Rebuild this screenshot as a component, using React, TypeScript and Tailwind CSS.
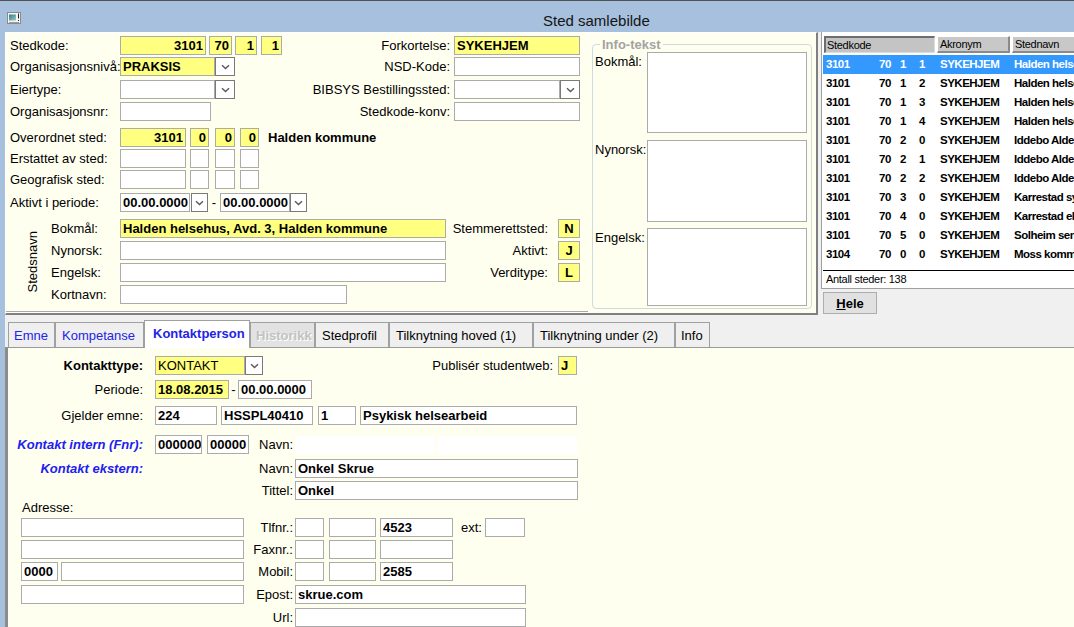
import React from "react";

type BoxProps = {
  className?: string;
  children?: React.ReactNode;
  yellow?: boolean;
  right?: boolean;
  center?: boolean;
  bold?: boolean;
};

function Box({ className = "", children, yellow = false, right = false, center = false, bold = true }: BoxProps) {
  return (
    <div
      className={`h-[19px] shrink-0 border border-[#ababab] flex items-center px-[2px] text-[13px] leading-none whitespace-nowrap overflow-hidden ${
        yellow ? "bg-[#ffff80]" : "bg-white"
      } ${right ? "justify-end" : center ? "justify-center" : ""} ${bold ? "font-bold" : ""} ${className}`}
    >
      {children}
    </div>
  );
}

function Dd({ className = "w-[20px]" }: { className?: string }) {
  return (
    <div className={`h-[19px] shrink-0 border border-[#7a7a7a] bg-white flex items-center justify-center ${className}`}>
      <svg width="9" height="6" viewBox="0 0 9 6">
        <path d="M1 1.2 L4.5 4.6 L8 1.2" fill="none" stroke="#5a5a5a" strokeWidth="1.4" />
      </svg>
    </div>
  );
}

function Lbl({ className = "", children }: { className?: string; children?: React.ReactNode }) {
  return <div className={`shrink-0 text-[13px] leading-[15px] whitespace-nowrap ${className}`}>{children}</div>;
}

function WinIcon() {
  return (
    <svg width="14" height="13" viewBox="0 0 14 13">
      <defs>
        <linearGradient id="g1" x1="0" y1="0" x2="1" y2="1">
          <stop offset="0" stopColor="#2f7f86" />
          <stop offset="1" stopColor="#9fc9c4" />
        </linearGradient>
      </defs>
      <rect x="0.5" y="0.5" width="13" height="11" fill="#f4f4f4" stroke="#8a8a8a" />
      <rect x="2" y="2.5" width="7" height="6" fill="url(#g1)" />
      <rect x="11" y="1.5" width="1" height="5" fill="#222" />
      <rect x="11" y="8" width="1" height="1" fill="#222" />
      <rect x="2" y="10" width="10" height="1" fill="#9a9a9a" />
    </svg>
  );
}

const listRows: string[][] = [
  ["3101", "70", "1", "1", "SYKEHJEM", "Halden helsehus, Avd. 1"],
  ["3101", "70", "1", "2", "SYKEHJEM", "Halden helsehus, Avd. 2"],
  ["3101", "70", "1", "3", "SYKEHJEM", "Halden helsehus, Avd. 3"],
  ["3101", "70", "1", "4", "SYKEHJEM", "Halden helsehus, Avd. 4"],
  ["3101", "70", "2", "0", "SYKEHJEM", "Iddebo Aldershjem"],
  ["3101", "70", "2", "1", "SYKEHJEM", "Iddebo Aldershjem, Avd. 1"],
  ["3101", "70", "2", "2", "SYKEHJEM", "Iddebo Aldershjem, Avd. 2"],
  ["3101", "70", "3", "0", "SYKEHJEM", "Karrestad sykehjem"],
  ["3101", "70", "4", "0", "SYKEHJEM", "Karrestad eldresenter"],
  ["3101", "70", "5", "0", "SYKEHJEM", "Solheim senter"],
  ["3104", "70", "0", "0", "SYKEHJEM", "Moss kommune"],
];

function TopLeftPanel() {
  return (
    <div className="w-[813px] h-[283px] shrink-0 bg-[#fffff0] border-t border-l border-t-white border-l-white border-r-2 border-b-2 border-r-[#808080] border-b-[#808080] flex">
      <div className="w-[582px] shrink-0 flex flex-col">
        <div className="pl-[4px] pr-[8px] pt-[3px] flex flex-col">
          <div className="flex items-center h-[19px]">
            <Lbl className="w-[110px]">Stedkode:</Lbl>
            <Box yellow right className="w-[86px]">3101</Box>
            <Box yellow right className="w-[23px] ml-[3px]">70</Box>
            <Box yellow right className="w-[22px] ml-[3px]">1</Box>
            <Box yellow right className="w-[21px] ml-[4px]">1</Box>
            <div className="ml-auto flex items-center">
              <Lbl>Forkortelse:</Lbl>
              <Box yellow className="w-[126px] ml-[4px]">SYKEHJEM</Box>
            </div>
          </div>
          <div className="flex items-center h-[19px] mt-[2px]">
            <Lbl className="w-[110px]">Organisasjonsnivå:</Lbl>
            <Box yellow className="w-[95px]">PRAKSIS</Box>
            <Dd />
            <div className="ml-auto flex items-center">
              <Lbl>NSD-Kode:</Lbl>
              <Box className="w-[126px] ml-[4px]" />
            </div>
          </div>
          <div className="flex items-center h-[19px] mt-[4px]">
            <Lbl className="w-[110px]">Eiertype:</Lbl>
            <Box className="w-[95px]" />
            <Dd />
            <div className="ml-auto flex items-center">
              <Lbl>BIBSYS Bestillingssted:</Lbl>
              <Box className="w-[106px] ml-[4px]" />
              <Dd />
            </div>
          </div>
          <div className="flex items-center h-[19px] mt-[3px]">
            <Lbl className="w-[110px]">Organisasjonsnr:</Lbl>
            <Box className="w-[91px]" />
            <div className="ml-auto flex items-center">
              <Lbl>Stedkode-konv:</Lbl>
              <Box className="w-[126px] ml-[4px]" />
            </div>
          </div>
          <div className="flex items-center h-[19px] mt-[7px]">
            <Lbl className="w-[110px]">Overordnet sted:</Lbl>
            <Box yellow right className="w-[66px]">3101</Box>
            <Box yellow right className="w-[19px] ml-[4px]">0</Box>
            <Box yellow right className="w-[20px] ml-[6px]">0</Box>
            <Box yellow right className="w-[19px] ml-[5px]">0</Box>
            <div className="ml-[9px] text-[13px] font-bold leading-[15px] whitespace-nowrap">Halden kommune</div>
          </div>
          <div className="flex items-center h-[19px] mt-[2px]">
            <Lbl className="w-[110px]">Erstattet av sted:</Lbl>
            <Box className="w-[66px]" />
            <Box className="w-[19px] ml-[4px]" />
            <Box className="w-[20px] ml-[6px]" />
            <Box className="w-[19px] ml-[5px]" />
          </div>
          <div className="flex items-center h-[19px] mt-[2px]">
            <Lbl className="w-[110px]">Geografisk sted:</Lbl>
            <Box className="w-[66px]" />
            <Box className="w-[19px] ml-[4px]" />
            <Box className="w-[20px] ml-[6px]" />
            <Box className="w-[19px] ml-[5px]" />
          </div>
          <div className="flex items-center h-[19px] mt-[4px]">
            <Lbl className="w-[110px]">Aktivt i periode:</Lbl>
            <Box className="w-[70px]">00.00.0000</Box>
            <Dd className="w-[17px] ml-px" />
            <div className="w-[12px] text-center text-[13px] leading-[15px]">-</div>
            <Box className="w-[70px]">00.00.0000</Box>
            <Dd className="w-[17px]" />
          </div>
          <div className="flex mt-[7px]">
            <div className="w-[41px] shrink-0 flex items-center justify-center pl-[3px]">
              <span className="[writing-mode:vertical-rl] rotate-180 text-[13px] leading-[15px]">Stedsnavn</span>
            </div>
            <div className="flex flex-col">
              <div className="flex items-center h-[19px]">
                <Lbl className="w-[69px]">Bokmål:</Lbl>
                <Box yellow className="w-[326px]">Halden helsehus, Avd. 3, Halden kommune</Box>
                <Lbl className="w-[102px] text-right">Stemmerettsted:</Lbl>
                <Box yellow center className="w-[22px] ml-[10px]">N</Box>
              </div>
              <div className="flex items-center h-[19px] mt-[3px]">
                <Lbl className="w-[69px]">Nynorsk:</Lbl>
                <Box className="w-[326px]" />
                <Lbl className="w-[102px] text-right">Aktivt:</Lbl>
                <Box yellow center className="w-[22px] ml-[10px]">J</Box>
              </div>
              <div className="flex items-center h-[19px] mt-[3px]">
                <Lbl className="w-[69px]">Engelsk:</Lbl>
                <Box className="w-[326px]" />
                <Lbl className="w-[102px] text-right">Verditype:</Lbl>
                <Box yellow center className="w-[22px] ml-[10px]">L</Box>
              </div>
              <div className="flex items-center h-[19px] mt-[3px]">
                <Lbl className="w-[69px]">Kortnavn:</Lbl>
                <Box className="w-[227px]" />
              </div>
            </div>
          </div>
        </div>
        <div className="mt-[7px] h-px bg-[#a8a8a8]" />
        <div className="h-px bg-white" />
      </div>

      <fieldset className="ml-[4px] mt-[4px] w-[220px] h-[272px] shrink-0 border border-[#cfd9e1] rounded-[4px]">
        <legend className="ml-[7px] px-[2px] text-[13px] leading-[15px] font-bold text-[#a3a3a3]">Info-tekst</legend>
        <div className="flex pl-[2px]">
          <Lbl className="w-[52px] mt-[2px]">Bokmål:</Lbl>
          <div className="w-[160px] h-[81px] bg-white border border-[#ababab]" />
        </div>
        <div className="flex pl-[2px] mt-[7px]">
          <Lbl className="w-[52px] mt-[2px]">Nynorsk:</Lbl>
          <div className="w-[160px] h-[82px] bg-white border border-[#ababab]" />
        </div>
        <div className="flex pl-[2px] mt-[6px]">
          <Lbl className="w-[52px] mt-[2px]">Engelsk:</Lbl>
          <div className="w-[160px] h-[78px] bg-white border border-[#ababab]" />
        </div>
      </fieldset>
    </div>
  );
}

function ListPanel() {
  return (
    <div className="ml-[3px] w-[253px] shrink-0 flex flex-col">
      <div className="h-[257px] bg-white border-l border-b border-[#a0a0a0] flex flex-col overflow-hidden">
        <div className="flex h-[17px] mt-[4px] ml-[2px] text-[11px] tracking-[-0.3px] leading-none whitespace-nowrap">
          <div className="w-[111px] shrink-0 bg-[#c4c4c4] border-t-2 border-l-2 border-t-[#6e6e6e] border-l-[#6e6e6e] border-r border-b border-r-[#dcdcdc] border-b-[#dcdcdc] flex items-center pl-[1px]">
            Stedkode
          </div>
          <div className="w-[73px] ml-[2px] shrink-0 bg-[#c8c8c8] border-t border-l border-t-white border-l-white border-r-2 border-b-2 border-r-[#8a8a8a] border-b-[#8a8a8a] flex items-center pl-[2px]">
            Akronym
          </div>
          <div className="w-[70px] ml-[2px] shrink-0 bg-[#c8c8c8] border-t border-l border-t-white border-l-white border-b-2 border-b-[#8a8a8a] flex items-center pl-[2px]">
            Stednavn
          </div>
        </div>
        <div className="mt-[2px] ml-px h-[215px] overflow-hidden">
          {listRows.map((r, i) => (
            <div
              key={i}
              className={`h-[19px] flex items-center pl-[3px] text-[11.5px] font-bold tracking-[-0.5px] whitespace-nowrap ${
                i === 0 ? "bg-[#3399ff] text-white" : "text-black"
              }`}
            >
              <span className="w-[53px] shrink-0">{r[0]}</span>
              <span className="w-[21px] shrink-0">{r[1]}</span>
              <span className="w-[19px] shrink-0">{r[2]}</span>
              <span className="w-[21px] shrink-0">{r[3]}</span>
              <span className="w-[74px] shrink-0">{r[4]}</span>
              <span>{r[5]}</span>
            </div>
          ))}
        </div>
        <div className="h-px bg-black ml-px" />
        <div className="h-[17px] flex items-center pl-[4px] text-[11px] tracking-[-0.3px] whitespace-nowrap">Antall steder: 138</div>
      </div>
      <div className="mt-[3px] ml-[2px] w-[54px] h-[22px] bg-[#e1e1e1] border border-[#adadad] flex items-center justify-center text-[13px] font-bold leading-none">
        <span>
          <span className="underline">H</span>ele
        </span>
      </div>
    </div>
  );
}

function Tabs() {
  const base = "h-[25px] shrink-0 border border-b-0 border-[#a0a0a0] flex items-center text-[13px] leading-[15px] whitespace-nowrap";
  return (
    <div className="h-[32px] shrink-0 flex items-end pl-[3px]">
      <div className={`${base} w-[47px] pl-[5px] bg-[#efefef] text-[#2323e6]`}>Emne</div>
      <div className={`${base} w-[89px] pl-[6px] bg-[#efefef] text-[#2323e6]`}>Kompetanse</div>
      <div className="relative top-px z-10 h-[28px] w-[106px] shrink-0 border border-b-0 border-[#a0a0a0] bg-white flex items-center pl-[8px] pb-[3px] text-[13px] leading-[15px] font-bold text-[#2323e6] whitespace-nowrap">
        Kontaktperson
      </div>
      <div className={`${base} w-[65px] pl-[5px] bg-[#e2e2e2] font-bold text-[#c2c2c2] [text-shadow:1px_1px_0_#ffffff]`}>Historikk</div>
      <div className={`${base} w-[74px] pl-[6px] bg-[#efefef]`}>Stedprofil</div>
      <div className={`${base} w-[144px] pl-[6px] bg-[#efefef]`}>Tilknytning hoved (1)</div>
      <div className={`${base} w-[142px] pl-[6px] bg-[#efefef]`}>Tilknytning under (2)</div>
      <div className={`${base} w-[35px] pl-[5px] bg-[#efefef]`}>Info</div>
    </div>
  );
}

function BottomPanel() {
  return (
    <div className="flex-1 min-h-0 bg-[#fffff0] border-t border-t-[#9a9a9a] border-l-[3px] border-l-[#8c8c8c] flex flex-col pt-[8px] overflow-hidden">
      <div className="flex items-center h-[19px] shrink-0">
        <Lbl className="w-[135px] text-right font-bold">Kontakttype:</Lbl>
        <Box yellow bold={false} className="w-[90px] ml-[12px]">KONTAKT</Box>
        <Dd className="w-[18px]" />
        <div className="w-[314px] flex items-center justify-end">
          <Lbl>Publisér studentweb:</Lbl>
          <Box yellow className="w-[19px] ml-[5px]">J</Box>
        </div>
      </div>
      <div className="flex items-center h-[19px] mt-[5px] shrink-0">
        <Lbl className="w-[135px] text-right">Periode:</Lbl>
        <Box yellow className="w-[74px] ml-[12px]">18.08.2015</Box>
        <div className="w-[9px] text-center text-[13px] leading-[15px]">-</div>
        <Box className="w-[74px]">00.00.0000</Box>
      </div>
      <div className="flex items-center h-[19px] mt-[7px] shrink-0">
        <Lbl className="w-[135px] text-right">Gjelder emne:</Lbl>
        <Box className="w-[62px] ml-[12px]">224</Box>
        <Box className="w-[92px] ml-[4px]">HSSPL40410</Box>
        <Box className="w-[38px] ml-[5px]">1</Box>
        <Box className="w-[217px] ml-[4px]">Psykisk helsearbeid</Box>
      </div>
      <div className="flex items-center h-[19px] mt-[10px] shrink-0">
        <div className="w-[241px] shrink-0 flex items-center">
          <Lbl className="w-[135px] text-right font-bold italic text-[#2020f0]">Kontakt intern (Fnr):</Lbl>
          <Box className="w-[47px] ml-[12px]">000000</Box>
          <Box className="w-[42px] ml-[5px]">00000</Box>
        </div>
        <Lbl className="w-[44px] text-right">Navn:</Lbl>
        <div className="w-[140px] h-[18px] ml-[2px] bg-white shrink-0" />
        <div className="w-[139px] h-[18px] ml-[3px] bg-white shrink-0" />
      </div>
      <div className="flex items-center h-[19px] mt-[5px] shrink-0">
        <div className="w-[241px] shrink-0">
          <Lbl className="w-[135px] text-right font-bold italic text-[#2020f0]">Kontakt ekstern:</Lbl>
        </div>
        <Lbl className="w-[44px] text-right">Navn:</Lbl>
        <Box className="w-[283px] ml-[2px]">Onkel Skrue</Box>
      </div>
      <div className="flex items-center h-[19px] mt-[3px] shrink-0">
        <div className="w-[241px] shrink-0" />
        <Lbl className="w-[44px] text-right">Tittel:</Lbl>
        <Box className="w-[283px] ml-[2px]">Onkel</Box>
      </div>
      <div className="h-[15px] pl-[14px] shrink-0">
        <Lbl>Adresse:</Lbl>
      </div>
      <div className="flex items-center h-[19px] mt-[3px] shrink-0">
        <div className="w-[241px] shrink-0 pl-[13px]">
          <Box className="w-[223px]" />
        </div>
        <Lbl className="w-[44px] text-right">Tlfnr.:</Lbl>
        <Box className="w-[29px] ml-[2px]" />
        <Box className="w-[47px] ml-[5px]" />
        <Box className="w-[73px] ml-[4px]">4523</Box>
        <Lbl className="ml-[8px]">ext:</Lbl>
        <Box className="w-[40px] ml-[3px]" />
      </div>
      <div className="flex items-center h-[19px] mt-[3px] shrink-0">
        <div className="w-[241px] shrink-0 pl-[13px]">
          <Box className="w-[223px]" />
        </div>
        <Lbl className="w-[44px] text-right">Faxnr.:</Lbl>
        <Box className="w-[29px] ml-[2px]" />
        <Box className="w-[47px] ml-[5px]" />
        <Box className="w-[73px] ml-[4px]" />
      </div>
      <div className="flex items-center h-[19px] mt-[3px] shrink-0">
        <div className="w-[241px] shrink-0 pl-[13px] flex">
          <Box className="w-[37px]">0000</Box>
          <Box className="w-[183px] ml-[3px]" />
        </div>
        <Lbl className="w-[44px] text-right">Mobil:</Lbl>
        <Box className="w-[29px] ml-[2px]" />
        <Box className="w-[47px] ml-[5px]" />
        <Box className="w-[73px] ml-[4px]">2585</Box>
      </div>
      <div className="flex items-center h-[19px] mt-[4px] shrink-0">
        <div className="w-[241px] shrink-0 pl-[13px]">
          <Box className="w-[223px]" />
        </div>
        <Lbl className="w-[44px] text-right">Epost:</Lbl>
        <Box className="w-[231px] ml-[2px]">skrue.com</Box>
      </div>
      <div className="flex items-center h-[19px] mt-[4px] shrink-0">
        <div className="w-[241px] shrink-0" />
        <Lbl className="w-[44px] text-right">Url:</Lbl>
        <Box className="w-[231px] ml-[2px]" />
      </div>
    </div>
  );
}

export default function App() {
  return (
    <div className="w-[1074px] h-[627px] overflow-hidden bg-[#a6c0dd] font-['Liberation_Sans',Arial,sans-serif] text-black flex flex-col">
      <div className="h-px bg-[#505050] shrink-0" />
      <div className="h-[31px] shrink-0 flex items-start">
        <div className="ml-[7px] mt-[11px] w-[14px] shrink-0">
          <WinIcon />
        </div>
        <div className="ml-[522px] pt-[11px] text-[15px] leading-[18px] text-[#141414] whitespace-nowrap">Sted samlebilde</div>
      </div>
      <div className="flex-1 min-h-0 flex">
        <div className="w-[5px] shrink-0" />
        <div className="flex-1 min-w-0 bg-[#f0f0f0] flex flex-col">
          <div className="h-[283px] shrink-0 flex">
            <TopLeftPanel />
            <ListPanel />
          </div>
          <Tabs />
          <BottomPanel />
        </div>
      </div>
    </div>
  );
}
